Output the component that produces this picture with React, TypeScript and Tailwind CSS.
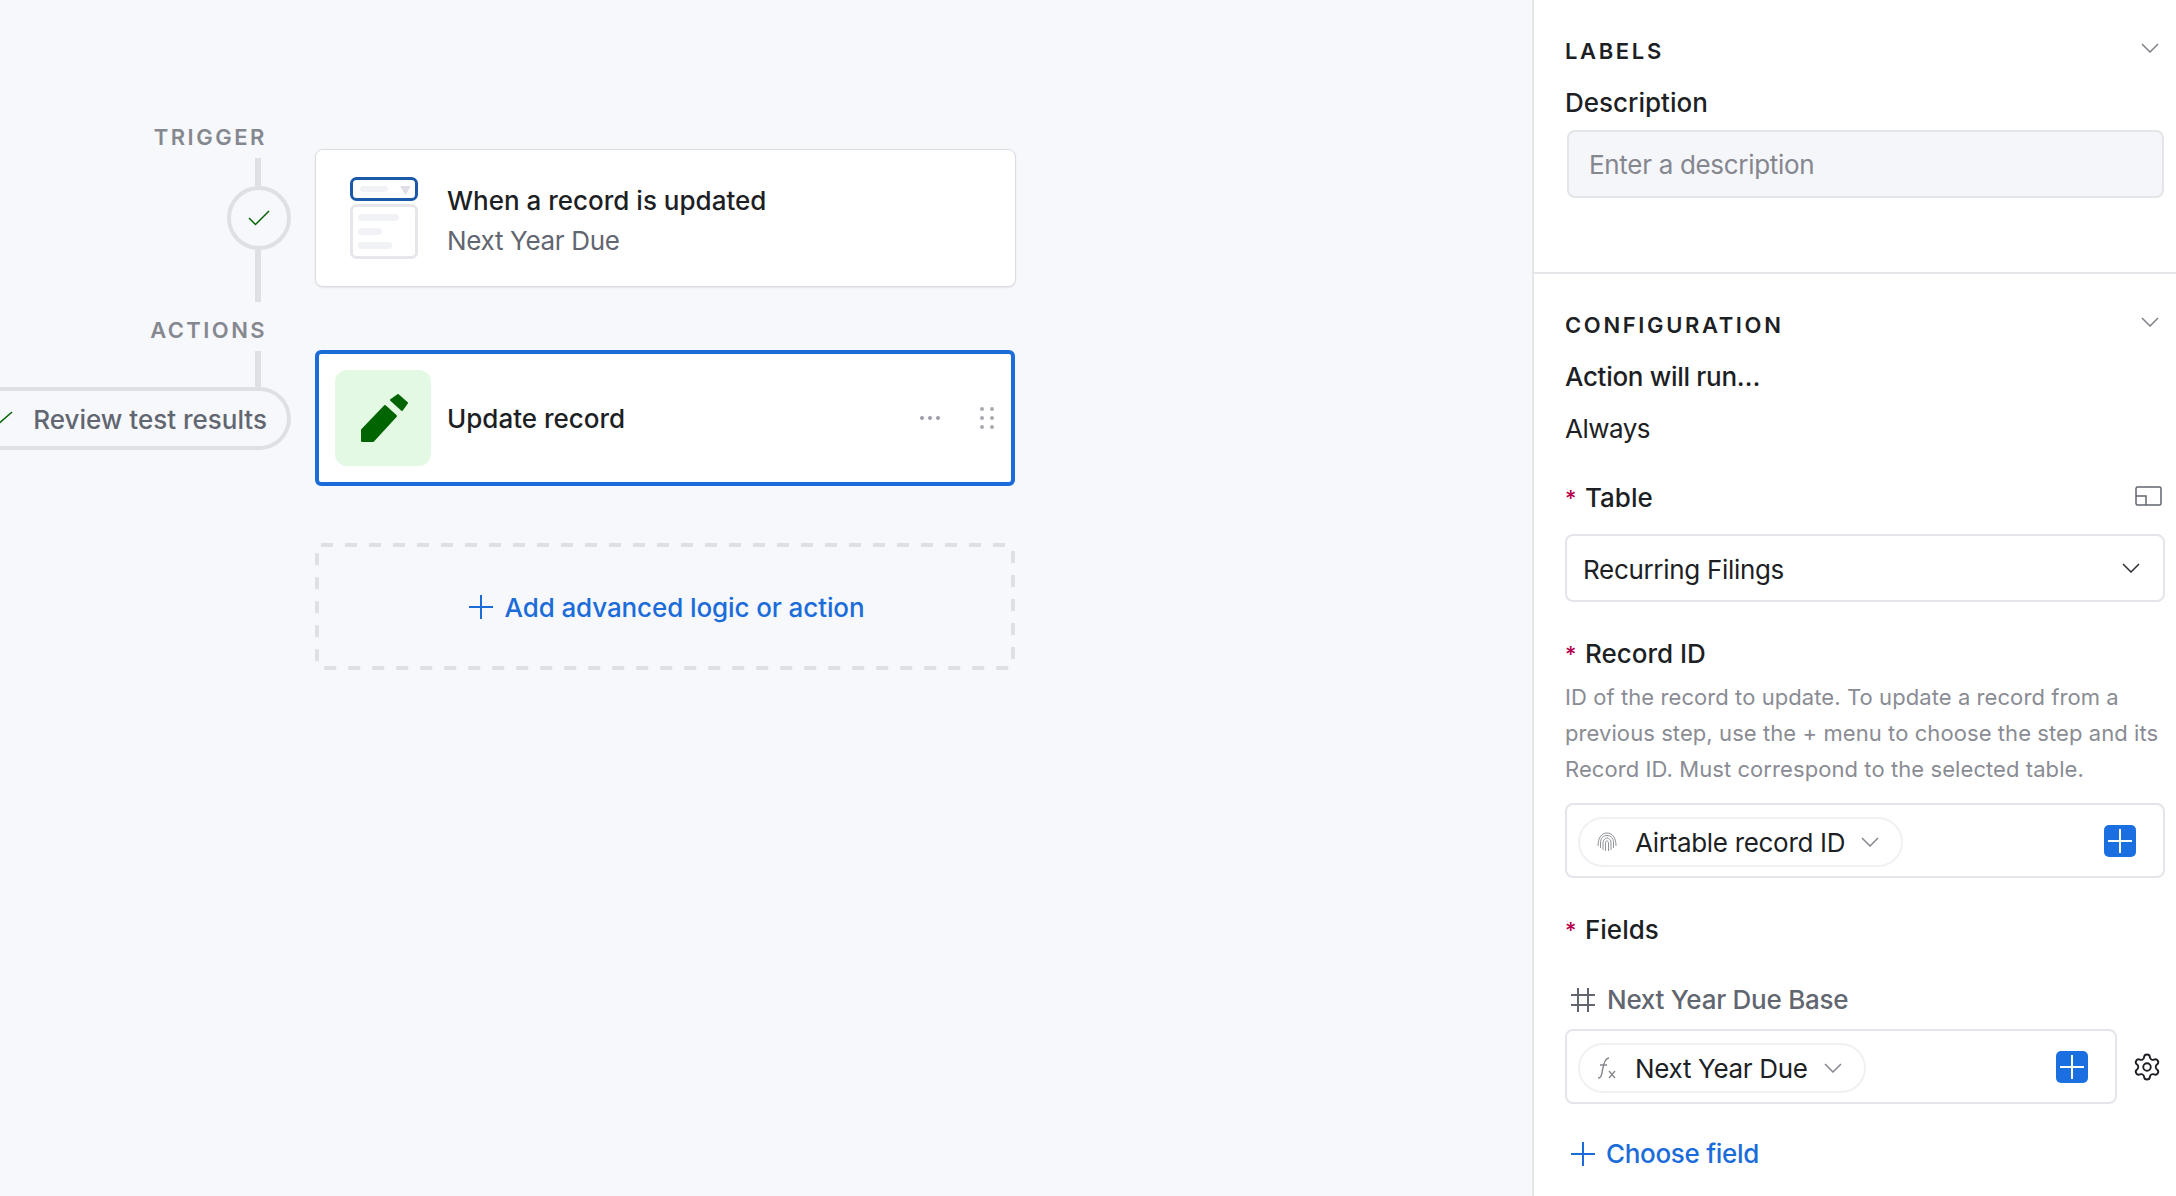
import { Settings } from "lucide-react";

function Chevron({ className = "text-[#7d8088]", width = 18 }: { className?: string; width?: number }) {
  return (
    <svg width={width} height={10} viewBox="0 0 18 10" fill="none" className={`shrink-0 ${className}`}>
      <path d="M1 1l8 8 8-8" stroke="currentColor" strokeWidth="1.5" />
    </svg>
  );
}

function Plus({ className = "" }: { className?: string }) {
  return (
    <svg width={24} height={24} viewBox="0 0 24 24" fill="none" className={`shrink-0 ${className}`}>
      <path d="M12 0v24M0 12h24" stroke="currentColor" strokeWidth="2" />
    </svg>
  );
}

function PlusButton() {
  return (
    <div className="flex h-8 w-8 shrink-0 items-center justify-center rounded-[5px] bg-[#1b6fe0]">
      <svg width={26} height={26} viewBox="0 0 26 26" fill="none">
        <path d="M13 1v24M1 13h24" stroke="white" strokeWidth="2" />
      </svg>
    </div>
  );
}

function TriggerIcon() {
  return (
    <svg width={68} height={82} viewBox="0 0 68 82" fill="none" className="shrink-0">
      <rect x="1.5" y="1.5" width="65" height="21" rx="5" stroke="#1b5aa6" strokeWidth="3" fill="white" />
      <rect x="10" y="9" width="28" height="6" rx="3" fill="#f1f2f6" />
      <path d="M50 9h11l-5.5 9z" fill="#dfe0e5" />
      <rect x="1.5" y="28.5" width="65" height="52" rx="5" stroke="#e6e7ea" strokeWidth="3" fill="white" />
      <rect x="8" y="37" width="41" height="7" rx="3.5" fill="#f1f2f6" />
      <rect x="8" y="51" width="24" height="7" rx="3.5" fill="#f1f2f6" />
      <rect x="8" y="65" width="34" height="7" rx="3.5" fill="#f1f2f6" />
    </svg>
  );
}

function Pencil() {
  return (
    <svg width={48} height={48} viewBox="0 0 48 48" fill="#006400" stroke="#006400" strokeWidth="2" strokeLinejoin="round" className="ml-[2px]">
      <path d="M2 36L25 12l11 10-23 25H2z" />
      <path d="M31 6l7-5 9 8-5 7z" />
    </svg>
  );
}

function FingerprintIcon() {
  return (
    <svg width={20} height={20} viewBox="0 0 20 20" fill="none" stroke="#85878f" strokeWidth="0.9" className="shrink-0">
      <path d="M1 14C1 5 5 1 10 1s9 4 9 13" />
      <path d="M3.500 16v-5c0-5 2.500-7.500 6.500-7.500s6.500 2.500 6.500 7.500v5" />
      <path d="M6 18v-7c0-3 2-5 4-5s4 2 4 5v7" />
      <path d="M8.500 19v-8c0-1 .5-2 1.500-2s1.500 1 1.500 2v8" />
    </svg>
  );
}

function FxIcon() {
  return (
    <svg width={20} height={24} viewBox="0 0 20 24" fill="none" stroke="#85878f" className="shrink-0">
      <path d="M1 22c3 0 3.500-2 4.500-8S8 2 12 2" strokeWidth="1.500" />
      <path d="M3 9h7" strokeWidth="1.500" />
      <path d="M12 15l6 7M18 15l-6 7" strokeWidth="1.300" />
    </svg>
  );
}

function Required({ children }: { children: string }) {
  return (
    <div className="flex h-9 items-center pt-[2px] font-medium text-[#1d1f25]">
      <span className="w-5 text-[22px] leading-9 text-[#b5004f]">*</span>
      {children}
    </div>
  );
}

function Chip({ icon, label }: { icon: React.ReactNode; label: string }) {
  return (
    <div className="mt-[2px] flex h-[50px] items-center rounded-full border-2 border-[#f0f1f4] pr-[22px] pl-[17px]">
      <div className="flex w-5 justify-center">{icon}</div>
      <span className="ml-[18px] pt-[3px] tracking-[-0.012em] text-[#1d1f25]">{label}</span>
      <Chevron className="ml-4 text-[#85878f]" />
    </div>
  );
}

export default function App() {
  return (
    <div className="flex h-[1196px] w-[2176px] overflow-hidden bg-[#f6f8fc] font-['Inter',sans-serif] text-[26px] leading-9">
      <div className="flex w-[1532px] shrink-0">
        {/* timeline */}
        <div className="flex w-[291px] shrink-0 flex-col items-end overflow-hidden pt-[122px]">
          <div className="h-[30px] pr-[26px] text-[22px] leading-[30px] font-semibold tracking-[0.115em] text-[#85888f]">
            <span className="-mr-[2px] block">TRIGGER</span>
          </div>
          <div className="mt-[6px] mr-[30px] h-7 w-[6px] bg-[#dfe0e5]" />
          <div className="flex h-16 w-16 items-center justify-center rounded-full border-4 border-[#dfe0e5]">
            <svg width={22} height={16} viewBox="0 0 22 16" fill="none">
              <path d="M1 8l6.500 6.500L21 1" stroke="#006400" strokeWidth="1.500" />
            </svg>
          </div>
          <div className="mr-[30px] h-[52px] w-[6px] bg-[#dfe0e5]" />
          <div className="mt-[13px] h-[30px] pr-[26px] text-[22px] leading-[30px] font-semibold tracking-[0.11em] text-[#85888f]">
            <span className="-mr-[2px] block">ACTIONS</span>
          </div>
          <div className="mt-[6px] mr-[30px] h-9 w-[6px] bg-[#dfe0e5]" />
          <div className="flex h-[63px] shrink-0 items-center whitespace-nowrap rounded-r-full border-y-4 border-r-4 border-[#dfe0e5] pr-5 pl-0 font-medium text-[#616670]">
            <svg width={24} height={16} viewBox="0 0 24 16" fill="none" className="-ml-[10px]">
              <path d="M1 8l6.500 6.500L23 1" stroke="#006400" strokeWidth="1.500" />
            </svg>
            <span className="ml-5 pt-[2px]">Review test results</span>
          </div>
        </div>

        {/* cards */}
        <div className="ml-6 w-[701px] shrink-0 pt-[149px]">
          <div className="flex h-[138px] items-center rounded-lg border border-[#dcdde2] bg-white pl-[34px] shadow-[0_1px_2px_rgba(0,0,0,0.08)]">
            <TriggerIcon />
            <div className="ml-[29px] pt-[6px]">
              <div className="leading-10 font-medium text-[#1d1f25]">When a record is updated</div>
              <div className="leading-10 tracking-[-0.012em] text-[#616670]">Next Year Due</div>
            </div>
          </div>

          <div className="mt-[63px] flex h-[136px] w-[700px] items-center rounded-[6px] border-4 border-[#1b6cd9] bg-white pl-4">
            <div className="flex h-24 w-24 items-center justify-center rounded-xl bg-[#e3f9e3]">
              <Pencil />
            </div>
            <div className="ml-4 flex-1 pt-[2px] font-medium text-[#1d1f25]">Update record</div>
            <svg width={20} height={4} viewBox="0 0 20 4" fill="#9b9ea6">
              <circle cx="2" cy="2" r="2" />
              <circle cx="10" cy="2" r="2" />
              <circle cx="18" cy="2" r="2" />
            </svg>
            <svg width={14} height={22} viewBox="0 0 14 22" fill="#a8abb2" className="mr-[17px] ml-[40px]">
              <circle cx="2" cy="2" r="2" />
              <circle cx="12" cy="2" r="2" />
              <circle cx="2" cy="11" r="2" />
              <circle cx="12" cy="11" r="2" />
              <circle cx="2" cy="20" r="2" />
              <circle cx="12" cy="20" r="2" />
            </svg>
          </div>

          <div className="relative mt-[57px] flex h-[127px] w-[700px] items-center justify-center pt-[2px] pl-[3px] font-medium tracking-[-0.004em] text-[#1b6cd9]">
            <svg width={700} height={127} viewBox="0 0 700 127" fill="none" className="absolute inset-0">
              <rect x="2" y="2" width="696" height="123" rx="4" stroke="#dfe0e5" strokeWidth="4" strokeDasharray="12 12" />
            </svg>
            <Plus className="-mt-[2px]" />
            <span className="ml-3">Add advanced logic or action</span>
          </div>
        </div>
      </div>

      {/* right panel */}
      <div className="w-[644px] shrink-0 border-l-2 border-[#e5e6ea] bg-white">
        <div className="h-[274px] border-b-2 border-[#e5e6ea] pt-9 pr-[11px] pl-[31px]">
          <div className="flex items-start justify-between">
            <div className="text-[22px] leading-[30px] font-semibold tracking-[0.12em] text-[#1d1f25]">LABELS</div>
            <Chevron className="mt-[7px] mr-[6px] text-[#7d8088]" />
          </div>
          <div className="mt-[19px] font-medium text-[#1d1f25]">Description</div>
          <div className="mt-[9px] ml-[2px] flex h-[68px] w-[597px] items-center rounded-lg border-2 border-[#e4e5ea] bg-[#f5f6fa] pt-[2px] pl-5 tracking-[-0.012em] text-[#85878f]">
            Enter a description
          </div>
        </div>

        <div className="pt-9 pr-[11px] pl-[31px]">
          <div className="flex items-start justify-between">
            <div className="text-[22px] leading-[30px] font-semibold tracking-[0.12em] text-[#1d1f25]">CONFIGURATION</div>
            <Chevron className="mt-[7px] mr-[6px] text-[#7d8088]" />
          </div>
          <div className="mt-[19px] font-medium tracking-[-0.012em] text-[#1d1f25]">Action will run…</div>
          <div className="mt-[16px] tracking-[-0.02em] text-[#1d1f25]">Always</div>

          <div className="mt-[32px] flex items-center justify-between">
            <Required>Table</Required>
            <svg width={27} height={20} viewBox="0 0 27 20" fill="none" stroke="#616670" strokeWidth="1.500" className="mr-[3px] mb-[2px]">
              <rect x="1" y="1" width="25" height="18" rx="1.500" />
              <path d="M1 10h10v9" />
            </svg>
          </div>
          <div className="mt-[19px] flex h-[68px] items-center justify-between rounded-lg border-2 border-[#e4e5ea] pr-[23px] pl-4 text-[#1d1f25]">
            <span className="pt-[3px] tracking-[-0.012em]">Recurring Filings</span>
            <Chevron className="text-[#2b2d33]" />
          </div>

          <div className="mt-[33px]">
            <Required>Record ID</Required>
          </div>
          <p className="mt-2 text-[22px] leading-9 tracking-[0.0035em] text-[#8a8c94]">
            ID of the record to update. To update a record from a previous step, use the + menu to choose the step and its Record ID. Must correspond to the selected table.
          </p>
          <div className="mt-4 flex h-[75px] items-center justify-between rounded-lg border-2 border-[#e4e5ea] pr-[27px] pl-[11px]">
            <Chip icon={<FingerprintIcon />} label="Airtable record ID" />
            <PlusButton />
          </div>

          <div className="mt-[33px]">
            <Required>Fields</Required>
          </div>
          <div className="mt-[35px] flex items-center pl-[6px] font-medium tracking-[-0.01em] text-[#616670]">
            <svg width={24} height={24} viewBox="0 0 24 24" fill="none" stroke="#616670" strokeWidth="2" className="shrink-0">
              <path d="M7 0v24M17 0v24M0 7h24M0 17h24" />
            </svg>
            <span className="ml-3">Next Year Due Base</span>
          </div>
          <div className="mt-[11px] flex items-center">
            <div className="flex h-[75px] w-[552px] items-center justify-between rounded-lg border-2 border-[#e4e5ea] pr-[27px] pl-[11px]">
              <Chip icon={<FxIcon />} label="Next Year Due" />
              <PlusButton />
            </div>
            <Settings size={30} strokeWidth={1.5} className="ml-[15px] text-[#1d1f25]" />
          </div>
          <div className="mt-8 flex items-center pl-[6px] font-medium tracking-[-0.012em] text-[#1b6cd9]">
            <Plus />
            <span className="ml-[11px]">Choose field</span>
          </div>
        </div>
      </div>
    </div>
  );
}
